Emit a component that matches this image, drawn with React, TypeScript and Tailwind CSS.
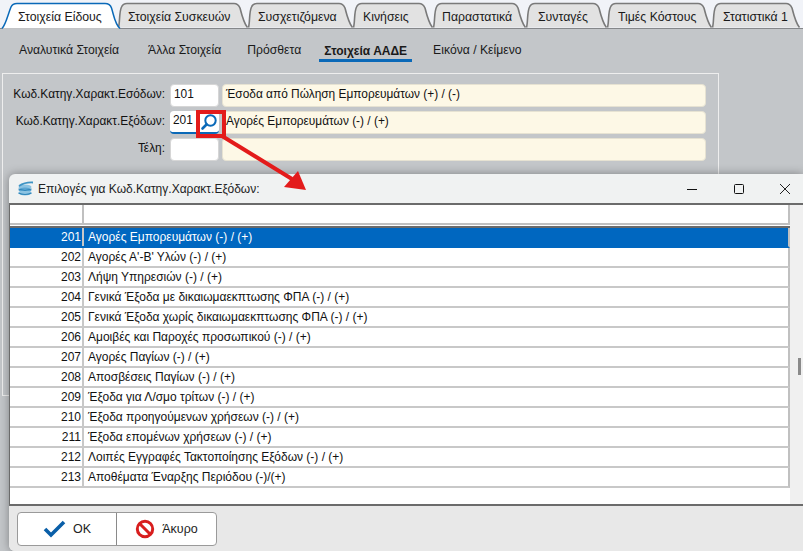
const FONT = "font-['Liberation_Sans',Arial,sans-serif]";

const tabs = [
  { label: "Στοιχεία Συσκευών", w: 130, pad: 10 },
  { label: "Συσχετιζόμενα", w: 105, pad: 10 },
  { label: "Κινήσεις", w: 80, pad: 10 },
  { label: "Παραστατικά", w: 93, pad: 9 },
  { label: "Συνταγές", w: 81, pad: 12 },
  { label: "Τιμές Κόστους", w: 105, pad: 11 },
  { label: "Στατιστικά 1", w: 88, pad: 11 },
];

const rows: [string, string][] = [
  ["201", "Αγορές Εμπορευμάτων (-) / (+)"],
  ["202", "Αγορές Α'-Β' Υλών (-) / (+)"],
  ["203", "Λήψη Υπηρεσιών (-) / (+)"],
  ["204", "Γενικά Έξοδα με δικαιωμαεκπτωσης ΦΠΑ (-) / (+)"],
  ["205", "Γενικά Έξοδα χωρίς δικαιωμαεκπτωσης ΦΠΑ (-) / (+)"],
  ["206", "Αμοιβές και Παροχές προσωπικού (-) / (+)"],
  ["207", "Αγορές Παγίων (-) / (+)"],
  ["208", "Αποσβέσεις Παγίων (-) / (+)"],
  ["209", "Έξοδα για Λ/σμο τρίτων (-) / (+)"],
  ["210", "Έξοδα προηγούμενων χρήσεων (-) / (+)"],
  ["211", "Έξοδα επομένων χρήσεων (-) / (+)"],
  ["212", "Λοιπές Εγγραφές Τακτοποίησης Εξόδων (-) / (+)"],
  ["213", "Αποθέματα Έναρξης Περιόδου (-)/(+)"],
];

function TabShape({ w, active }: { w: number; active?: boolean }) {
  const bottom = active ? 28.5 : 27.5;
  const d = active
    ? `M0 ${bottom} C4 ${bottom - 4} 6 14 9 7 Q10.5 3.5 15 3.5 L${w - 13} 3.5 Q${w - 8} 3.5 ${w - 6.5} 8 C${w - 4} 16 ${w - 3} ${bottom - 4} ${w + 2} ${bottom}`
    : `M0.5 ${bottom} C2 ${bottom - 5} 1 12 3.5 7 Q5 3.5 9 3.5 L${w - 14} 3.5 Q${w - 10} 3.5 ${w - 8} 8 C${w - 6} 16 ${w - 4} ${bottom - 4} ${w - 0.5} ${bottom}`;
  return (
    <svg className="absolute inset-0 overflow-visible" width={w} height={29} viewBox={`0 0 ${w} 29`} fill="none">
      <path d={d} fill={active ? "#ffffff" : "#e2e2e2"} stroke={active ? "#0a69b8" : "#7a7a7a"} strokeWidth={active ? 1.5 : 1.6} />
    </svg>
  );
}

function Tab({ label, w, pad, active }: { label: string; w: number; pad: number; active?: boolean }) {
  return (
    <div className={`relative h-[29px] shrink-0 ${active ? "z-10" : ""}`} style={{ width: w }}>
      <TabShape w={w} active={active} />
      <span
        className="relative flex h-[29px] items-center whitespace-nowrap pt-[5px] text-[12.3px] text-[#1a1a1a]"
        style={{ paddingLeft: pad }}
      >
        {label}
      </span>
    </div>
  );
}

function Field({ label, value, text, focused }: { label: string; value: string; text: string; focused?: boolean }) {
  return (
    <div className="flex h-[27px] items-center text-[11.9px] text-[#111]">
      <div className="w-[162px] pb-[1px] text-right">{label}</div>
      <div
        className={`ml-[5px] flex h-[23px] w-[49px] items-center rounded-[4px] bg-white pb-[2px] pl-[3px] ${
          focused ? "border-b-2 border-[#0a69b8]" : "border border-[#d6d6d6]"
        }`}
      >
        {value}
      </div>
      <div className="ml-[3px] flex h-[23px] w-[484px] items-center rounded-[4px] border border-[#e6e2d2] bg-[#fdf8e6] pb-[1px] pl-[3px]">
        {text}
      </div>
    </div>
  );
}

export default function App() {
  return (
    <div className={`relative h-[551px] w-[803px] overflow-hidden bg-[#c3c6c9] ${FONT}`}>
      <div className="flex h-[29px] items-start border-b border-[#85878a] bg-[#f1f3f8] pl-[2px]">
        <Tab label="Στοιχεία Είδους" w={116} pad={16} active />
        {tabs.map((t) => (
          <Tab key={t.label} label={t.label} w={t.w} pad={t.pad} />
        ))}
      </div>
      <div className="flex h-[33px] items-center pl-[19px] pt-[10px] text-[12.2px] text-[#1a1a1a]">
        <span>Αναλυτικά Στοιχεία</span>
        <span className="ml-[29px]">Άλλα Στοιχεία</span>
        <span className="ml-[26px]">Πρόσθετα</span>
        <span className="relative ml-[23px] text-[12px] font-bold">
          Στοιχεία ΑΑΔΕ
          <span className="absolute -bottom-[2px] -left-[5px] -right-[5px] h-[3px] bg-[#0a69b8]" />
        </span>
        <span className="ml-[26px]">Εικόνα / Κείμενο</span>
      </div>
      <div className="ml-[2px] mt-[11px] h-[323px] w-[717px] border border-[#eeeeee] pt-[8px]">
        <Field label="Κωδ.Κατηγ.Χαρακτ.Εσόδων:" value="101" text="Έσοδα από Πώληση Εμπορευμάτων (+) / (-)" />
        <Field label="Κωδ.Κατηγ.Χαρακτ.Εξόδων:" value="201" text="Αγορές Εμπορευμάτων (-) / (+)" focused />
        <Field label="Τέλη:" value="" text="" />
      </div>

      {/* Dialog window */}
      <div className="absolute left-[9px] top-[174px] flex h-[377px] w-[794px] flex-col overflow-hidden rounded-tl-[6px] rounded-bl-[6px] bg-[#f0f2f2] shadow-[0_0_10px_rgba(0,0,0,0.35)]">
        <div className="flex h-[31px] shrink-0 items-center border-b-2 border-[#6b6b6b] pl-[8px]">
          <svg width="17" height="16" viewBox="0 0 17 16" fill="none">
            <ellipse cx="8" cy="6" rx="6.5" ry="2.6" fill="#8cc3e2" />
            <ellipse cx="8" cy="9" rx="6.5" ry="2.6" fill="#5aa5d2" />
            <ellipse cx="8" cy="12" rx="6.5" ry="2.6" fill="#8cc3e2" />
            <path d="M1.5 12 Q8 15 14.5 12" stroke="#2f86ba" strokeWidth="1.2" />
            <path d="M1.5 8 Q8 11 14.5 8" stroke="#2f86ba" strokeWidth="1" />
            <path d="M2 5 Q8 1 16 1.5" stroke="#3d93c4" strokeWidth="1.8" />
          </svg>
          <span className="ml-[4px] text-[12px] text-[#222]">Επιλογές για Κωδ.Κατηγ.Χαρακτ.Εξόδων:</span>
          <div className="ml-auto flex items-center">
            <svg width="12" height="12" viewBox="0 0 12 12" className="mr-[34px]" fill="none">
              <path d="M0 6.5 H10" stroke="#111" strokeWidth="1" />
            </svg>
            <svg width="12" height="12" viewBox="0 0 12 12" className="mr-[34px]" fill="none">
              <rect x="1.5" y="1.5" width="9" height="9" rx="1" stroke="#111" strokeWidth="1" />
            </svg>
            <svg width="12" height="12" viewBox="0 0 12 12" className="mr-[12px]" fill="none">
              <path d="M1 1 L11 11 M11 1 L1 11" stroke="#222" strokeWidth="1" />
            </svg>
          </div>
        </div>
        <div className="flex min-h-0 flex-1">
          <div className="flex w-[781px] shrink-0 flex-col border-l border-[#6b6b6b] bg-white">
            <div className="flex h-[20px] shrink-0 border-b-2 border-r-2 border-[#c0c0c0]">
              <div className="w-[74px] border-r-2 border-[#c0c0c0]" />
            </div>
            <div className="h-[1px] bg-white" />
            <div className="h-[2px] bg-[#6b6b6b]" />
            {rows.map(([code, name], i) => (
              <div
                key={code}
                className={`flex h-[20px] shrink-0 border-b-2 border-r-2 border-r-[#c0c0c0] text-[12px] ${
                  i === 0 ? "border-b-[#0067c0] bg-[#0067c0] text-white" : "border-b-[#c8c8c8] text-[#111]"
                }`}
              >
                <div className="flex w-[74px] items-center justify-end border-r-2 border-[#c8c8c8] pr-[1px]">{code}</div>
                <div className="flex items-center pl-[4px]">{name}</div>
              </div>
            ))}
            <div className="flex-1" />
          </div>
          <div className="relative flex-1 bg-[#f0f0f0]">
            <div className="absolute left-[8px] top-[153px] h-[17px] w-[3px] bg-[#8a8a8a]" />
          </div>
        </div>
        <div className="flex h-[47px] shrink-0 items-start border-t-2 border-[#6b6b6b] bg-[#e8e8e8] pl-[8px] pt-[6px]">
          <div className="flex h-[34px] w-[200px] rounded-[4px] border border-[#9a9a9a] bg-white text-[12.5px] text-[#222]">
            <div className="flex w-[99px] items-center justify-center gap-[7px] border-r border-[#8a8a8a]">
              <svg width="23" height="18" viewBox="0 0 23 18" fill="none">
                <path d="M2 9 L8 15 L21 2" stroke="#0a5fa8" strokeWidth="3.6" />
              </svg>
              <span>OK</span>
            </div>
            <div className="flex flex-1 items-center justify-center gap-[7px]">
              <svg width="20" height="20" viewBox="0 0 20 20" fill="none">
                <circle cx="10" cy="10" r="7.7" stroke="#d81e1e" strokeWidth="3" />
                <path d="M4.5 4.5 L15.5 15.5" stroke="#d81e1e" strokeWidth="3" />
              </svg>
              <span>Άκυρο</span>
            </div>
          </div>
        </div>
      </div>

      {/* Search icon with red annotation, over the dialog */}
      <svg className="absolute left-[196px] top-[108px]" width="115" height="90" viewBox="0 0 115 90" fill="none">
        <circle cx="14.5" cy="12.5" r="5.2" stroke="#0a69b8" strokeWidth="2" />
        <path d="M10.5 16.5 L6.5 20.5" stroke="#0a69b8" strokeWidth="2.6" strokeLinecap="round" />
        <rect x="2" y="4" width="26" height="24" stroke="#e31b1b" strokeWidth="4" />
        <path d="M26 28 L96 71" stroke="#e31b1b" strokeWidth="4" />
        <path d="M110 82 L88 79 L102 63 Z" fill="#e31b1b" />
      </svg>
    </div>
  );
}
